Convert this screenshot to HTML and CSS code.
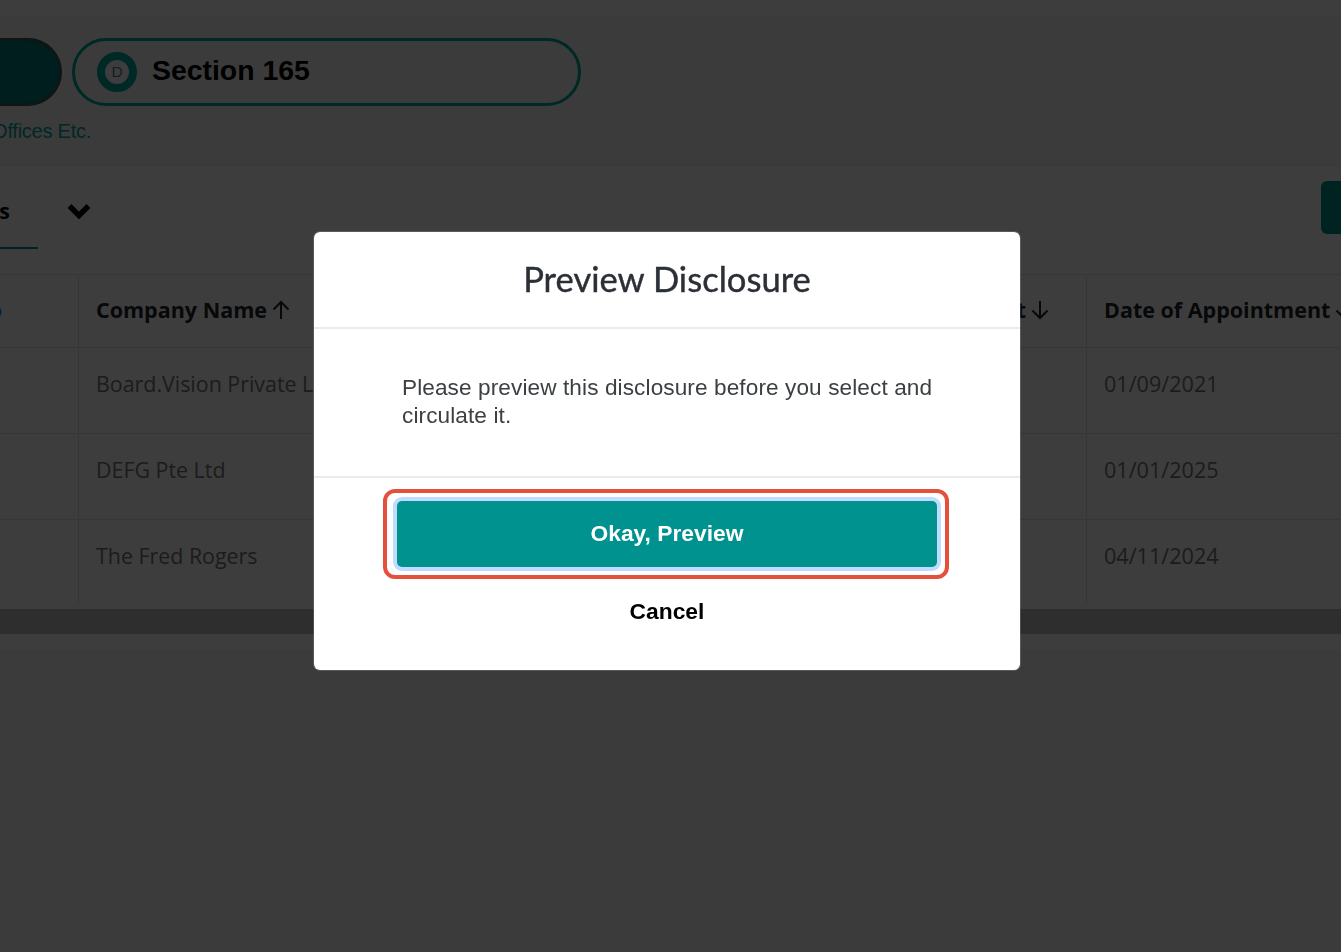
FILE: index.html
```html
<!DOCTYPE html>
<html lang="en">
<head>
<meta charset="utf-8">
<title>Preview Disclosure</title>
<link rel="stylesheet" href="styles.css">
</head>
<body>
<div class="page">
  <section class="top-band">
    <div class="pills">
      <div class="pill pill-filled"></div>
      <div class="pill pill-outline">
        <span class="ring">D</span>
        <span class="pill-label">Section 165</span>
      </div>
    </div>
    <p class="hint">Directorships, Offices Etc.</p>
  </section>
  <section class="toolbar">
    <div class="tabs">
      <span class="tab">Directorships</span>
      <svg class="chevron" viewBox="0 0 26 18" width="26" height="18"><path d="M3.500 5 13 14.500 22.500 5" fill="none" stroke="#000" stroke-width="5.400"/></svg>
    </div>
    <div class="tool-button"></div>
  </section>
  <div class="table-clip">
    <table class="grid">
      <colgroup>
        <col class="c-first"><col class="c-company"><col class="c-third"><col class="c-date">
      </colgroup>
      <thead>
        <tr>
          <th class="link-head">Info</th>
          <th>Company Name<svg class="arrow" viewBox="0 0 20 20" width="20" height="20"><path d="M10 19V2M2.500 9.500 10 2l7.500 7.500" fill="none" stroke="#212529" stroke-width="2"/></svg></th>
          <th class="right-head">Appointment<svg class="arrow" viewBox="0 0 20 20" width="20" height="20"><path d="M10 1v17M2.500 10.500 10 18l7.500-7.500" fill="none" stroke="#212529" stroke-width="2"/></svg></th>
          <th>Date of Appointment<svg class="arrow" viewBox="0 0 20 20" width="20" height="20"><path d="M10 1v17M2.500 10.500 10 18l7.500-7.500" fill="none" stroke="#212529" stroke-width="2"/></svg></th>
        </tr>
      </thead>
      <tbody>
        <tr><td></td><td>Board.Vision Private Limited</td><td></td><td class="date">01/09/2021</td></tr>
        <tr><td></td><td>DEFG Pte Ltd</td><td></td><td class="date">01/01/2025</td></tr>
        <tr><td></td><td>The Fred Rogers</td><td></td><td class="date">04/11/2024</td></tr>
      </tbody>
    </table>
  </div>
  <div class="scroll-track"><div class="scroll-thumb"></div></div>
</div>
<div class="backdrop">
  <div class="modal">
    <header class="modal-head"><h2 class="modal-title">Preview Disclosure</h2></header>
    <div class="modal-body"><p class="modal-text">Please preview this disclosure before you select and circulate it.</p></div>
    <footer class="modal-foot">
      <div class="callout"><button class="btn-primary" type="button">Okay, Preview</button></div>
      <button class="btn-link" type="button">Cancel</button>
    </footer>
  </div>
</div>
</body>
</html>
```
FILE: styles.css
```css
* { box-sizing: border-box; }
html, body { margin: 0; height: 100%; overflow: hidden; }
body { background: #fff; font-family: "Liberation Sans", Arial, sans-serif; color: #212529; }

.page { width: 100%; height: 952px; overflow: hidden; background: #f5f5f5; }

.top-band { height: 166px; background: #f5f5f5; padding-top: 23px; border-top: 15px solid #fff; border-bottom: 1px solid #ececec; }
.pills { display: flex; gap: 10px; margin-left: -140px; }
.pill { height: 68px; border-radius: 34px; }
.pill-filled { width: 202px; background: #007f7c; border: 3px solid #3a5a57; }
.pill-outline { width: 509px; border: 3px solid #00a896; display: flex; align-items: center; gap: 15px; padding-left: 22px; background: #f5f5f5; }
.ring { width: 40px; height: 40px; border-radius: 50%; border: 8px solid #00a89c; display: flex; align-items: center; justify-content: center; font-size: 15.500px; color: #5f7a8a; background: #fff; }
.pill-label { font-size: 28.400px; font-weight: 700; color: #000; padding-bottom: 4px; }
.hint { margin: 11px 0 0 -140px; font-size: 20px; line-height: 28px; color: #00a8a0; width: 231px; white-space: nowrap; text-align: right; letter-spacing: -0.250px; }

.toolbar { height: 108px; display: flex; justify-content: space-between; align-items: flex-start; background: #fff; }
.tabs { display: flex; margin-left: -140px; }
.tab { width: 178px; height: 83px; padding-top: 30px; font-family: "Open Sans", sans-serif; font-size: 21.400px; line-height: 30px; font-weight: 700; color: #000; text-align: right; padding-right: 28px; border-bottom: 2px solid #00928f; white-space: nowrap; }
.chevron { margin: 35px 0 0 28px; }
.tool-button { width: 20px; height: 53px; margin-top: 15px; background: #00928f; border-radius: 6px 0 0 6px; }

.table-clip { overflow: hidden; height: 331px; background: #fff; }
.grid { border-collapse: collapse; table-layout: fixed; width: 1600px; margin-left: -100px; font-family: "Open Sans", sans-serif; font-size: 21.400px; }
.c-first { width: 178px; }
.c-company { width: 450px; }
.c-third { width: 558px; }
.c-date { width: 414px; }
.grid th, .grid td { border: 1px solid #dee2e6; padding: 0 0 0 17px; white-space: nowrap; overflow: hidden; text-align: left; }
.grid th { height: 73px; padding-bottom: 3px; font-size: 21.500px; font-weight: 700; color: #212529; vertical-align: middle; }
.grid td { height: 86px; padding-top: 18px; vertical-align: top; color: #757575; line-height: 36px; }
.grid .date { font-size: 21.600px; }
.grid .link-head { color: #0d6efd; text-align: right; padding: 0 76px 3px 0; }
.grid .right-head { text-align: right; padding: 0 36px 3px 0; }
.arrow { vertical-align: -2px; margin-left: 4px; }

.scroll-track { height: 45px; background: #fff; padding-top: 4px; }
.scroll-thumb { height: 25px; background: #c1c1c1; }

.backdrop { position: fixed; inset: 0; background: rgba(0, 0, 0, 0.76); display: flex; justify-content: center; align-items: flex-start; padding: 231px 7px 0 0; }
.modal { width: 708px; height: 440px; background: #fff; border: 1px solid rgba(255, 255, 255, 0.15); background-clip: padding-box; border-radius: 7px; display: flex; flex-direction: column; }
.modal-head { height: 97px; border-bottom: 2px solid #e9ecef; display: flex; justify-content: center; align-items: center; }
.modal-title { margin: 0; font-family: Lato, sans-serif; font-size: 34.600px; font-weight: 400; -webkit-text-stroke: 0.400px #2b2f36; color: #2b2f36; padding-bottom: 2px; }
.modal-body { height: 149px; border-bottom: 2px solid #e9ecef; padding: 45px 77px 0 88px; }
.modal-text { margin: 0; font-size: 22.600px; line-height: 28px; letter-spacing: 0.100px; color: #3c4043; }
.modal-foot { flex: 1; display: flex; flex-direction: column; align-items: center; padding-top: 11px; }
.callout { border: 4px solid #e4503c; border-radius: 12px; padding: 8px 8px 8px 10px; margin-right: 2px; background: #fff; }
.btn-primary { display: block; width: 540px; height: 66px; border: 0; border-radius: 5px; background: #00928f; color: #fff; padding-bottom: 3px; font: 700 22.800px "Liberation Sans", Arial, sans-serif; box-shadow: 0 0 0 4px #bfdcff; }
.btn-link { margin-top: 15px; border: 0; background: none; padding: 0; height: 34px; font: 700 22.800px "Liberation Sans", Arial, sans-serif; color: #000; }
```
